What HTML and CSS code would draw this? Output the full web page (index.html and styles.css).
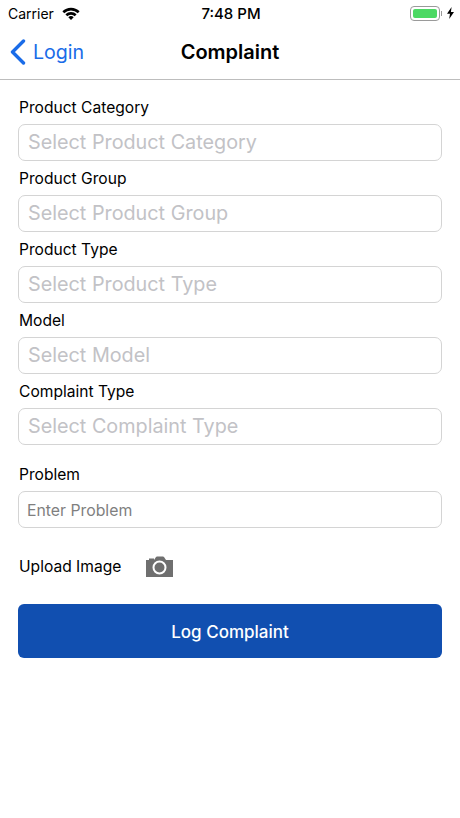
FILE: index.html
```html
<!DOCTYPE html>
<html lang="en">
<head>
    <meta charset="UTF-8">
    <meta name="viewport" content="width=device-width, initial-scale=1.0">
    <title>Complaint</title>
    <link rel="stylesheet" href="styles.css">
</head>
<body>
    <div class="status-bar">
        <div class="status-left">
            <span>Carrier</span>
            <svg class="wifi" width="18" height="13" viewBox="0 0 18 13">
                <path d="M0.4 4.3 A12.2 12.2 0 0 1 17.6 4.3 L15.8 6.2 A9.7 9.7 0 0 0 2.2 6.2 Z" fill="#000"/>
                <path d="M3.4 7.3 A8 8 0 0 1 14.6 7.3 L12.8 9.2 A5.4 5.4 0 0 0 5.2 9.2 Z" fill="#000"/>
                <path d="M6.3 10.2 A3.9 3.9 0 0 1 11.7 10.2 L9 13 Z" fill="#000"/>
            </svg>
        </div>
        <div class="status-time">7:48 PM</div>
        <div class="status-right">
            <div class="battery"><div class="battery-level"></div></div>
            <div class="battery-tip"></div>
            <svg class="bolt" width="7" height="12" viewBox="0 0 7 12">
                <path d="M4.6 0 L0 6.8 H3 L2.2 12 L7 4.9 H3.9 Z" fill="#000"/>
            </svg>
        </div>
    </div>

    <div class="nav-bar">
        <a class="back" href="#">
            <svg width="17" height="26" viewBox="0 0 17 26">
                <path d="M14.5 2 L3.5 13 L14.5 24" fill="none" stroke="#1a6ce8" stroke-width="3.4" stroke-linecap="round" stroke-linejoin="round"/>
            </svg>
            <span>Login</span>
        </a>
        <div class="nav-title">Complaint</div>
    </div>

    <div class="form">
        <label for="category">Product Category</label>
        <input class="select-field" type="text" id="category" placeholder="Select Product Category">

        <label for="group">Product Group</label>
        <input class="select-field" type="text" id="group" placeholder="Select Product Group">

        <label for="type">Product Type</label>
        <input class="select-field" type="text" id="type" placeholder="Select Product Type">

        <label for="model">Model</label>
        <input class="select-field" type="text" id="model" placeholder="Select Model">

        <label for="complaint-type">Complaint Type</label>
        <input class="select-field" type="text" id="complaint-type" placeholder="Select Complaint Type">

        <label class="problem-label" for="problem">Problem</label>
        <input class="text-field" type="text" id="problem" placeholder="Enter Problem">

        <div class="upload">
            <span>Upload Image</span>
            <svg width="27" height="21" viewBox="0 0 27 21">
                <path d="M0 4 H3 V2.4 H8 V4 L10 1 Q10.4 0.5 11 0.5 H17 Q17.6 0.5 18 1 L20 4 H27 V21 H0 Z" fill="#6f6f6f"/>
                <circle cx="13.5" cy="11.5" r="6" fill="none" stroke="#fff" stroke-width="2"/>
            </svg>
        </div>

        <button class="submit">Log Complaint</button>
    </div>
</body>
</html>
```

FILE: styles.css
```css
* {
    box-sizing: border-box;
}
body {
    margin: 0;
    font-family: Inter, "Liberation Sans", sans-serif;
    background-color: #fff;
    color: #000;
}
.status-bar {
    display: grid;
    grid-template-columns: 1fr auto 1fr;
    align-items: center;
    height: 26px;
    padding: 0 6px 0 8px;
}
.status-left {
    display: flex;
    align-items: center;
    gap: 8px;
    font-size: 14px;
}
.status-time {
    font-size: 15px;
    font-weight: 500;
}
.status-right {
    display: flex;
    align-items: center;
    justify-content: flex-end;
}
.battery {
    width: 30px;
    height: 15px;
    padding: 2px;
    border: 1px solid #9a9a9a;
    border-radius: 4px;
}
.battery-level {
    height: 100%;
    background-color: #4cd964;
    border-radius: 2px;
}
.battery-tip {
    width: 1px;
    height: 5px;
    margin-left: 1px;
    background-color: #9a9a9a;
}
.bolt {
    margin-left: 5px;
}
.nav-bar {
    position: relative;
    display: flex;
    align-items: center;
    justify-content: center;
    height: 54px;
    border-bottom: 1px solid #bdbdbd;
}
.back {
    position: absolute;
    left: 9px;
    top: 13px;
    display: flex;
    align-items: center;
    gap: 7px;
    font-size: 19.6px;
    color: #1a6ce8;
    text-decoration: none;
}
.nav-title {
    font-size: 20px;
    font-weight: 600;
    padding-bottom: 2px;
}
.form {
    display: flex;
    flex-direction: column;
    padding: 10px 18px 0;
}
label {
    font-size: 15.6px;
    line-height: 36px;
    height: 34px;
    padding-left: 1px;
}
.select-field, .text-field {
    width: 100%;
    height: 37px;
    border: 1px solid #d4d4d4;
    border-radius: 7px;
    font-family: inherit;
    background: #fff;
    outline: none;
}
.select-field {
    padding: 0 9px 2px;
    font-size: 19.8px;
}
.text-field {
    padding: 1px 8px 0;
    font-size: 15.8px;
}
.select-field::placeholder {
    color: #c2c2c6;
    opacity: 1;
}
.text-field::placeholder {
    color: #7f7f7f;
    opacity: 1;
}
.problem-label {
    margin-top: 12px;
}
.upload {
    display: flex;
    align-items: center;
    gap: 25px;
    height: 38px;
    margin-top: 19px;
    padding-left: 1px;
    font-size: 15.6px;
}
.submit {
    height: 54px;
    margin-top: 19px;
    padding-top: 2px;
    border: none;
    border-radius: 6px;
    background-color: #114fb0;
    color: #fff;
    font-family: inherit;
    font-size: 17px;
    font-weight: 500;
    cursor: pointer;
}
```
